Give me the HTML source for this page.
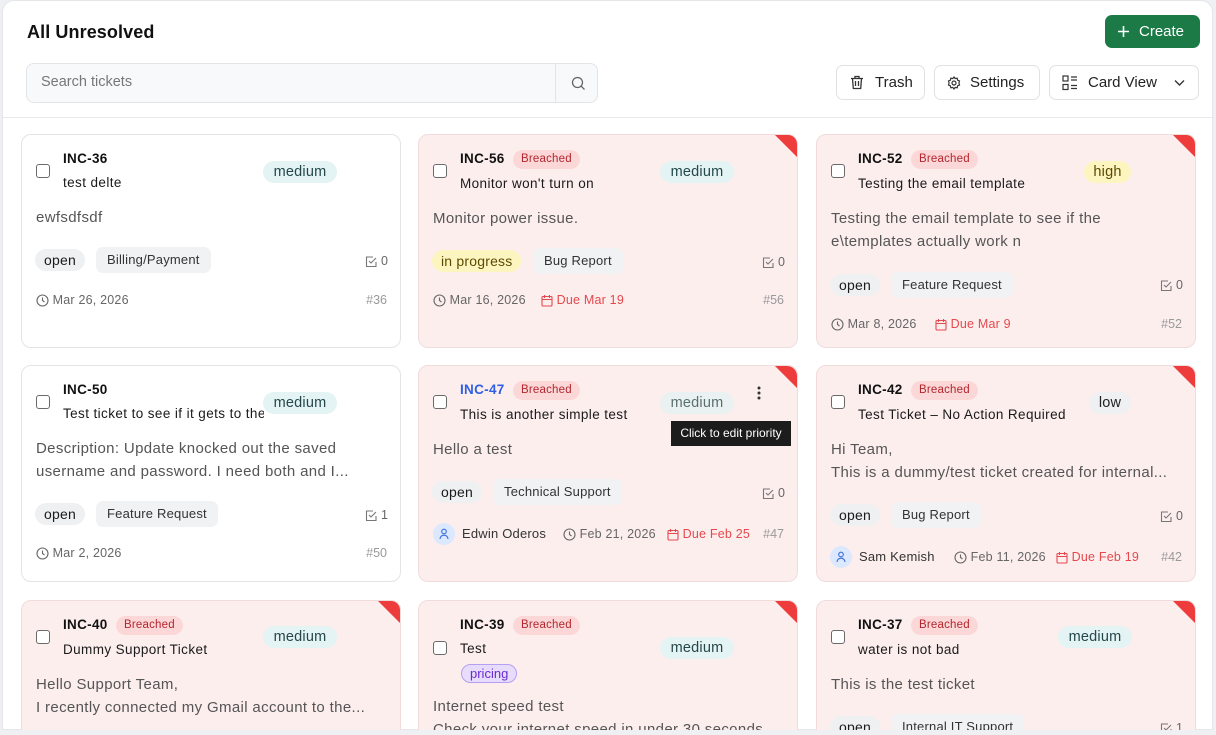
<!DOCTYPE html>
<html><head><meta charset="utf-8">
<style>
*{box-sizing:border-box;margin:0;padding:0}
html,body{width:1216px;height:735px;overflow:hidden}
body{background:#eef0f3;font-family:"Liberation Sans",sans-serif;position:relative}
.panel{position:absolute;left:2px;top:0;width:1211px;height:730px;background:#fff;border:1px solid #e4e6ea;border-radius:12px 12px 0 0;overflow:hidden}
.a{position:absolute;white-space:nowrap}
.h1{left:24px;top:20px;font-size:18px;font-weight:bold;color:#111;line-height:22px;letter-spacing:.1px}
.create{left:1102px;top:14px;width:95px;height:33px;background:#1b7a46;border-radius:7px;color:#fff;font-size:15px;line-height:33px;padding-left:34px}
.search{left:23px;top:62px;width:572px;height:40px;background:#f8f9fa;border:1px solid #e2e4e7;border-radius:8px}
.search span{position:absolute;left:14px;top:10px;font-size:14.5px;color:#777}
.search i{position:absolute;left:528px;top:0;width:1px;height:38px;background:#e2e4e7}
.btn{top:64px;height:35px;border:1px solid #dfe1e5;border-radius:7px;background:#fff;font-size:15px;color:#222;line-height:33px}
.hr{left:0;top:116px;width:1211px;height:1px;background:#e7e9ec}
.card{position:absolute;width:380px;border:1px solid #e2e4e8;border-radius:10px;background:#fff;overflow:hidden}
.br{background:#fdeeee;border-color:#f0dcdd}
.tri{position:absolute;right:0;top:0;width:22px;height:22px;background:#ee3b3b;clip-path:polygon(0 0,100% 0,100% 100%)}
.cb{position:absolute;left:14px;width:14px;height:14px;border:1.5px solid #6a6a6a;border-radius:3px;background:#fff}
.id{font-weight:bold;font-size:13.5px;color:#111;line-height:20px;left:41px;letter-spacing:.3px}
.ti{font-size:13.5px;color:#1a1a1a;line-height:20px;left:41px;letter-spacing:.4px}
.pri{height:22px;line-height:22px;border-radius:11px;font-size:14.5px;text-align:center;background:#e4f3f3;color:#24474a;letter-spacing:.2px}
.brd{height:19px;line-height:19px;padding:0 8px;border-radius:10px;background:#fcd7d8;color:#b3262d;font-size:11.5px;left:94px;letter-spacing:.2px}
.ds{font-size:15px;color:#555;line-height:23px;left:14px;letter-spacing:.35px}
.op{height:22px;line-height:22px;border-radius:11px;background:#eef0f2;font-size:14px;color:#1a1a1a;padding:0 9px;left:13px;letter-spacing:.2px}
.cat{height:26px;line-height:26px;border-radius:7px;background:#f0f2f4;font-size:13px;color:#333;padding:0 11px;letter-spacing:.2px}
.ck{right:12px;font-size:12.5px;color:#666;line-height:16px}
.ft{font-size:12.5px;color:#666;line-height:16px;letter-spacing:.2px}
.due{color:#e5484d}
.hash{right:13px;font-size:12.5px;color:#999;line-height:16px}
.av{width:22px;height:22px;border-radius:11px;background:#dbe8fd}
svg{vertical-align:middle}
</style></head><body>
<div class="panel">
<div class="a h1">All Unresolved</div>
<div class="a create"><svg style="position:absolute;left:12px;top:10px" width="13" height="13" viewBox="0 0 13 13"><path d="M6.5 1v11M1 6.5h11" stroke="#fff" stroke-width="1.6"/></svg>Create</div>
<div class="a search"><span>Search tickets</span><i></i><svg style="position:absolute;left:544px;top:12px" width="15" height="15" viewBox="0 0 15 15"><circle cx="6.5" cy="6.5" r="5" fill="none" stroke="#666" stroke-width="1.3"/><path d="M10.2 10.2l3.3 3.3" stroke="#666" stroke-width="1.3"/></svg></div>
<div class="a btn" style="left:833px;width:89px;padding-left:38px"><svg style="position:absolute;left:13px;top:9px" width="14" height="15" viewBox="0 0 14 15"><path d="M1 3.5h12M5 3.5V1.5h4v2M2.5 3.5l.8 10h7.4l.8-10M5.5 6v5M8.5 6v5" fill="none" stroke="#333" stroke-width="1.3"/></svg>Trash</div>
<div class="a btn" style="left:931px;width:106px;padding-left:35px"><svg style="position:absolute;left:12px;top:10px" width="14" height="14" viewBox="0 0 14 14"><circle cx="7" cy="7" r="2" fill="none" stroke="#333" stroke-width="1.2"/><path d="M7 1l1.2 1.6 2-.4.4 2L12.5 5l-.6 2 .6 2-1.9.8-.4 2-2-.4L7 13l-1.2-1.6-2 .4-.4-2L1.5 9l.6-2-.6-2 1.9-.8.4-2 2 .4z" fill="none" stroke="#333" stroke-width="1.2"/></svg>Settings</div>
<div class="a btn" style="left:1046px;width:150px;padding-left:38px"><svg style="position:absolute;left:12px;top:9px" width="16" height="16" viewBox="0 0 16 16"><rect x="1" y="1" width="5" height="5" fill="none" stroke="#333" stroke-width="1.2"/><rect x="1" y="9.5" width="5" height="5" fill="none" stroke="#333" stroke-width="1.2"/><path d="M9 2h6M9 5h6M9 10.5h6M9 13.5h6" stroke="#333" stroke-width="1.2"/></svg>Card View<svg style="position:absolute;left:124px;top:13px" width="11" height="8" viewBox="0 0 11 8"><path d="M1 1.5l4.5 4.5 4.5-4.5" fill="none" stroke="#333" stroke-width="1.4"/></svg></div>
<div class="a hr"></div>
</div>

<div class="card" style="left:21px;top:134px;height:214px">
 <div class="cb" style="top:29px"></div>
 <div class="a id" style="top:14px">INC-36</div>
 <div class="a ti" style="top:38px">test delte</div>
 <div class="a pri" style="left:241px;top:26px;width:74px">medium</div>
 <div class="a ds" style="top:71px">ewfsdfsdf</div>
 <div class="a op" style="top:114px">open</div>
 <div class="a cat" style="left:74px;top:112px">Billing/Payment</div>
 <div class="a ck" style="top:118px"><svg width="13" height="13" viewBox="0 0 13 13"><path d="M11 7v4.5H1.5V2H8" fill="none" stroke="#777" stroke-width="1.1"/><path d="M4 6l2 2 5-5" fill="none" stroke="#777" stroke-width="1.1"/></svg> 0</div>
 <div class="a ft" style="left:14px;top:157px"><svg width="13" height="13" viewBox="0 0 13 13"><circle cx="6.5" cy="6.5" r="5.5" fill="none" stroke="#666" stroke-width="1.1"/><path d="M6.5 3.5v3l2 1.5" fill="none" stroke="#666" stroke-width="1.1"/></svg> Mar 26, 2026</div>
 <div class="a hash" style="top:157px">#36</div>
</div>

<div class="card br" style="left:418px;top:134px;height:214px"><div class="tri"></div>
 <div class="cb" style="top:29px"></div>
 <div class="a id" style="top:14px">INC-56</div>
 <div class="a brd" style="top:15px">Breached</div>
 <div class="a ti" style="top:39px">Monitor won't turn on</div>
 <div class="a pri" style="left:241px;top:26px;width:74px">medium</div>
 <div class="a ds" style="top:72px">Monitor power issue.</div>
 <div class="a op" style="top:115px;background:#fdf5bf;color:#5c4a00">in progress</div>
 <div class="a cat" style="left:114px;top:113px">Bug Report</div>
 <div class="a ck" style="top:119px"><svg width="13" height="13" viewBox="0 0 13 13"><path d="M11 7v4.5H1.5V2H8" fill="none" stroke="#777" stroke-width="1.1"/><path d="M4 6l2 2 5-5" fill="none" stroke="#777" stroke-width="1.1"/></svg> 0</div>
 <div class="a ft" style="left:14px;top:157px"><svg width="13" height="13" viewBox="0 0 13 13"><circle cx="6.5" cy="6.5" r="5.5" fill="none" stroke="#666" stroke-width="1.1"/><path d="M6.5 3.5v3l2 1.5" fill="none" stroke="#666" stroke-width="1.1"/></svg> Mar 16, 2026</div>
 <div class="a ft due" style="left:122px;top:157px"><svg width="12" height="13" viewBox="0 0 12 13"><rect x="1" y="2.5" width="10" height="9.5" rx="1" fill="none" stroke="#e5484d" stroke-width="1.1"/><path d="M1 5.5h10M3.5 1v3M8.5 1v3" stroke="#e5484d" stroke-width="1.1"/></svg> Due Mar 19</div>
 <div class="a hash" style="top:157px">#56</div>
</div>

<div class="card br" style="left:816px;top:134px;height:214px"><div class="tri"></div>
 <div class="cb" style="top:29px"></div>
 <div class="a id" style="top:14px">INC-52</div>
 <div class="a brd" style="top:15px">Breached</div>
 <div class="a ti" style="top:39px">Testing the email template</div>
 <div class="a pri" style="left:267px;top:26px;width:47px;background:#fdf5bf;color:#5c4a00">high</div>
 <div class="a ds" style="top:72px">Testing the email template to see if the<br>e\templates actually work n</div>
 <div class="a op" style="top:139px">open</div>
 <div class="a cat" style="left:74px;top:137px">Feature Request</div>
 <div class="a ck" style="top:142px"><svg width="13" height="13" viewBox="0 0 13 13"><path d="M11 7v4.5H1.5V2H8" fill="none" stroke="#777" stroke-width="1.1"/><path d="M4 6l2 2 5-5" fill="none" stroke="#777" stroke-width="1.1"/></svg> 0</div>
 <div class="a ft" style="left:14px;top:181px"><svg width="13" height="13" viewBox="0 0 13 13"><circle cx="6.5" cy="6.5" r="5.5" fill="none" stroke="#666" stroke-width="1.1"/><path d="M6.5 3.5v3l2 1.5" fill="none" stroke="#666" stroke-width="1.1"/></svg> Mar 8, 2026</div>
 <div class="a ft due" style="left:118px;top:181px"><svg width="12" height="13" viewBox="0 0 12 13"><rect x="1" y="2.5" width="10" height="9.5" rx="1" fill="none" stroke="#e5484d" stroke-width="1.1"/><path d="M1 5.5h10M3.5 1v3M8.5 1v3" stroke="#e5484d" stroke-width="1.1"/></svg> Due Mar 9</div>
 <div class="a hash" style="top:181px">#52</div>
</div>

<div class="card" style="left:21px;top:365px;height:217px">
 <div class="cb" style="top:29px"></div>
 <div class="a id" style="top:14px">INC-50</div>
 <div class="a ti" style="top:38px;width:201px;overflow:hidden">Test ticket to see if it gets to the right team</div>
 <div class="a pri" style="left:241px;top:26px;width:74px">medium</div>
 <div class="a ds" style="top:71px">Description: Update knocked out the saved<br>username and password. I need both and I...</div>
 <div class="a op" style="top:137px">open</div>
 <div class="a cat" style="left:74px;top:135px">Feature Request</div>
 <div class="a ck" style="top:141px"><svg width="13" height="13" viewBox="0 0 13 13"><path d="M11 7v4.5H1.5V2H8" fill="none" stroke="#777" stroke-width="1.1"/><path d="M4 6l2 2 5-5" fill="none" stroke="#777" stroke-width="1.1"/></svg> 1</div>
 <div class="a ft" style="left:14px;top:179px"><svg width="13" height="13" viewBox="0 0 13 13"><circle cx="6.5" cy="6.5" r="5.5" fill="none" stroke="#666" stroke-width="1.1"/><path d="M6.5 3.5v3l2 1.5" fill="none" stroke="#666" stroke-width="1.1"/></svg> Mar 2, 2026</div>
 <div class="a hash" style="top:179px">#50</div>
</div>

<div class="card br" style="left:418px;top:365px;height:217px;overflow:visible"><div class="tri" style="border-top-right-radius:10px"></div>
 <div class="cb" style="top:29px"></div>
 <div class="a id" style="top:14px;color:#2f5fe3">INC-47</div>
 <div class="a brd" style="top:15px">Breached</div>
 <div class="a ti" style="top:39px">This is another simple test</div>
 <div class="a pri" style="left:241px;top:26px;width:74px;background:#e9f2f1;color:#5a6f70">medium</div>
 <svg class="a" style="left:338px;top:19px" width="4" height="16" viewBox="0 0 4 16"><circle cx="2" cy="3" r="1.5" fill="#333"/><circle cx="2" cy="8" r="1.5" fill="#333"/><circle cx="2" cy="13" r="1.5" fill="#333"/></svg>
 <div class="a" style="left:252px;top:55px;width:120px;height:25px;background:#1c1c1c;color:#fff;font-size:12px;line-height:25px;text-align:center;z-index:3">Click to edit priority</div>
 <div class="a ds" style="top:72px">Hello a test</div>
 <div class="a op" style="top:115px">open</div>
 <div class="a cat" style="left:74px;top:113px">Technical Support</div>
 <div class="a ck" style="top:119px"><svg width="13" height="13" viewBox="0 0 13 13"><path d="M11 7v4.5H1.5V2H8" fill="none" stroke="#777" stroke-width="1.1"/><path d="M4 6l2 2 5-5" fill="none" stroke="#777" stroke-width="1.1"/></svg> 0</div>
 <div class="a av" style="left:14px;top:157px"><svg style="position:absolute;left:6px;top:5px" width="10" height="12" viewBox="0 0 10 12"><circle cx="5" cy="3.5" r="2.3" fill="none" stroke="#3b6fe0" stroke-width="1.1"/><path d="M1 11c0-2.5 2-3.8 4-3.8s4 1.3 4 3.8" fill="none" stroke="#3b6fe0" stroke-width="1.1"/></svg></div>
 <div class="a ft" style="left:43px;top:160px;color:#333;font-size:13px">Edwin Oderos</div>
 <div class="a ft" style="left:144px;top:160px"><svg width="13" height="13" viewBox="0 0 13 13"><circle cx="6.5" cy="6.5" r="5.5" fill="none" stroke="#666" stroke-width="1.1"/><path d="M6.5 3.5v3l2 1.5" fill="none" stroke="#666" stroke-width="1.1"/></svg> Feb 21, 2026</div>
 <div class="a ft due" style="left:248px;top:160px"><svg width="12" height="13" viewBox="0 0 12 13"><rect x="1" y="2.5" width="10" height="9.5" rx="1" fill="none" stroke="#e5484d" stroke-width="1.1"/><path d="M1 5.5h10M3.5 1v3M8.5 1v3" stroke="#e5484d" stroke-width="1.1"/></svg> Due Feb 25</div>
 <div class="a hash" style="top:160px">#47</div>
</div>

<div class="card br" style="left:816px;top:365px;height:217px"><div class="tri"></div>
 <div class="cb" style="top:29px"></div>
 <div class="a id" style="top:14px">INC-42</div>
 <div class="a brd" style="top:15px">Breached</div>
 <div class="a ti" style="top:39px">Test Ticket – No Action Required</div>
 <div class="a pri" style="left:272px;top:26px;width:42px;background:#eef0f2;color:#222">low</div>
 <div class="a ds" style="top:72px">Hi Team,<br>This is a dummy/test ticket created for internal...</div>
 <div class="a op" style="top:138px">open</div>
 <div class="a cat" style="left:74px;top:136px">Bug Report</div>
 <div class="a ck" style="top:142px"><svg width="13" height="13" viewBox="0 0 13 13"><path d="M11 7v4.5H1.5V2H8" fill="none" stroke="#777" stroke-width="1.1"/><path d="M4 6l2 2 5-5" fill="none" stroke="#777" stroke-width="1.1"/></svg> 0</div>
 <div class="a av" style="left:13px;top:180px"><svg style="position:absolute;left:6px;top:5px" width="10" height="12" viewBox="0 0 10 12"><circle cx="5" cy="3.5" r="2.3" fill="none" stroke="#3b6fe0" stroke-width="1.1"/><path d="M1 11c0-2.5 2-3.8 4-3.8s4 1.3 4 3.8" fill="none" stroke="#3b6fe0" stroke-width="1.1"/></svg></div>
 <div class="a ft" style="left:42px;top:183px;color:#333;font-size:13px">Sam Kemish</div>
 <div class="a ft" style="left:137px;top:183px"><svg width="13" height="13" viewBox="0 0 13 13"><circle cx="6.5" cy="6.5" r="5.5" fill="none" stroke="#666" stroke-width="1.1"/><path d="M6.5 3.5v3l2 1.5" fill="none" stroke="#666" stroke-width="1.1"/></svg> Feb 11, 2026</div>
 <div class="a ft due" style="left:239px;top:183px"><svg width="12" height="13" viewBox="0 0 12 13"><rect x="1" y="2.5" width="10" height="9.5" rx="1" fill="none" stroke="#e5484d" stroke-width="1.1"/><path d="M1 5.5h10M3.5 1v3M8.5 1v3" stroke="#e5484d" stroke-width="1.1"/></svg> Due Feb 19</div>
 <div class="a hash" style="top:183px">#42</div>
</div>

<div style="position:absolute;left:0;top:117px;width:1213px;height:613px;overflow:hidden">
<div class="card br" style="left:21px;top:483px;height:200px"><div class="tri"></div>
 <div class="cb" style="top:29px"></div>
 <div class="a id" style="top:14px">INC-40</div>
 <div class="a brd" style="top:15px">Breached</div>
 <div class="a ti" style="top:39px">Dummy Support Ticket</div>
 <div class="a pri" style="left:241px;top:25px;width:74px">medium</div>
 <div class="a ds" style="top:72px">Hello Support Team,<br>I recently connected my Gmail account to the...</div>
</div>
<div class="card br" style="left:418px;top:483px;height:200px"><div class="tri"></div>
 <div class="cb" style="top:40px"></div>
 <div class="a id" style="top:14px">INC-39</div>
 <div class="a brd" style="top:15px">Breached</div>
 <div class="a ti" style="top:38px">Test</div>
 <div class="a" style="left:42px;top:63px;height:19px;line-height:17px;padding:0 8px;border-radius:10px;background:#e8dcfc;border:1px solid #b69ef0;color:#6a2bd0;font-size:13px">pricing</div>
 <div class="a pri" style="left:241px;top:36px;width:74px">medium</div>
 <div class="a ds" style="top:94px">Internet speed test<br>Check your internet speed in under 30 seconds</div>
</div>
<div class="card br" style="left:816px;top:483px;height:200px"><div class="tri"></div>
 <div class="cb" style="top:29px"></div>
 <div class="a id" style="top:14px">INC-37</div>
 <div class="a brd" style="top:15px">Breached</div>
 <div class="a ti" style="top:39px">water is not bad</div>
 <div class="a pri" style="left:241px;top:25px;width:74px">medium</div>
 <div class="a ds" style="top:72px">This is the test ticket</div>
 <div class="a op" style="top:115px">open</div>
 <div class="a cat" style="left:74px;top:113px">Internal IT Support</div>
 <div class="a ck" style="top:119px"><svg width="13" height="13" viewBox="0 0 13 13"><path d="M11 7v4.5H1.5V2H8" fill="none" stroke="#777" stroke-width="1.1"/><path d="M4 6l2 2 5-5" fill="none" stroke="#777" stroke-width="1.1"/></svg> 1</div>
</div>
</div>
</body></html>
